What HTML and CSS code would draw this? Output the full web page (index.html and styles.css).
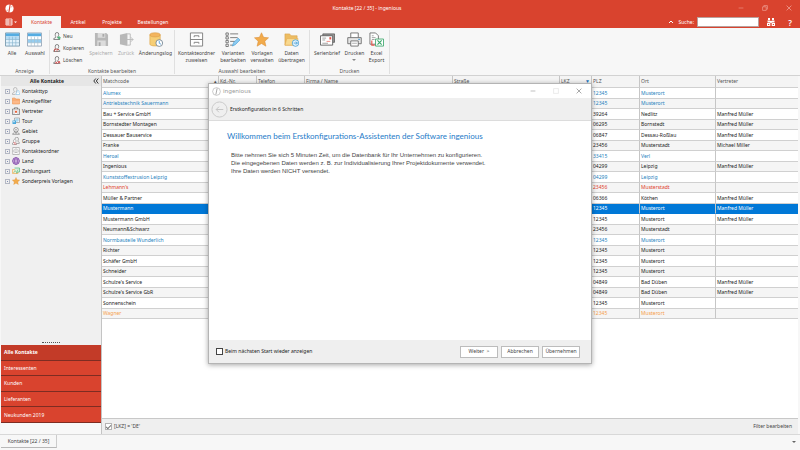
FILE: index.html
```html
<!DOCTYPE html>
<html lang="de">
<head>
<meta charset="utf-8">
<title>Kontakte - ingenious</title>
<link rel="stylesheet" href="styles.css">
</head>
<body>
<svg class="defs" aria-hidden="true">
  <symbol id="person" viewBox="0 0 16 16"><path d="M4.500 4.500a3.500 3.500 0 0 1 7 0c0 2-1 4-2 5v1.500l4 2v2h-12v-2l4-2V9.500c-1-1-1-3-1-5z" fill="none" stroke="#666" stroke-width="1.500"/></symbol>
  <symbol id="folder" viewBox="0 0 16 16"><path d="M1 2h5l1.500 2H15v10H1z" fill="#fbb98a" stroke="#ef8a3c"/><path d="M1 6h14" stroke="#ef8a3c"/></symbol>
  <symbol id="star" viewBox="0 0 16 16"><path d="M8 .8l2.200 4.900 5.300.5-4 3.600 1.200 5.300L8 12.300l-4.700 2.800 1.200-5.300-4-3.600 5.300-.5z" fill="#f2ab4b" stroke="#dc913b" stroke-width=".6"/></symbol>
  <symbol id="cabinet" viewBox="0 0 16 16"><path d="M1.500 1h13v14h-13zM1.500 8h13M5.500 5.500V4h5v1.500M5.500 12.500V11h5v1.500" fill="#fff" stroke="#808080" stroke-width="1"/></symbol>
  <symbol id="min" viewBox="0 0 10 10"><path d="M1 5h8" stroke="currentColor"/></symbol>
  <symbol id="close" viewBox="0 0 10 10"><path d="M1 1l8 8M9 1L1 9" stroke="currentColor" stroke-width="1.400"/></symbol>
</svg>

<header class="top">
  <div class="titlebar">
    <svg class="logo" viewBox="0 0 10 10"><circle cx="5" cy="5" r="4.500" fill="#fff"/><path d="M5.800 0L4.200 10" stroke="#d9432e" stroke-width="1.200"/><path d="M1.500 7.500l2-1M6.500 3.500l2-1" stroke="#d9432e" stroke-width=".5"/></svg>
    <h1>Kontakte [22 / 35] - ingenious</h1>
    <div class="winbtns">
      <button aria-label="Minimieren"><svg><use href="#min"/></svg></button>
      <button aria-label="Wiederherstellen"><svg viewBox="0 0 10 10"><path d="M1 3h6v6H1zM3 3V1h6v6H7" fill="none" stroke="currentColor" stroke-width="1.200"/></svg></button>
      <button aria-label="Schließen"><svg><use href="#close"/></svg></button>
    </div>
  </div>
  <nav class="tabs">
    <button class="file" aria-label="Datei"><svg viewBox="0 0 12 8"><path d="M1 1h6v6H1zM1 3h6M1 5h6M3 1v6" fill="none" stroke="#fff" stroke-width=".8"/><path d="M9 3.500h3L10.500 5z" fill="#fff"/></svg></button>
    <a class="tab on" href="#">Kontakte</a><a class="tab" href="#">Artikel</a><a class="tab" href="#">Projekte</a><a class="tab wide" href="#">Bestellungen</a>
    <div class="search">
      <svg class="caret" viewBox="0 0 6 6"><path d="M1 4l2-2 2 2" fill="none" stroke="#fff" stroke-width="1"/></svg>
      <label for="q">Suche:</label><input id="q" type="text">
      <button aria-label="Suchen"><svg class="bino" viewBox="0 0 10 10"><path d="M2 1h2v2H2zM6 1h2v2H6zM1.500 3.500h2.800v2H1.500zM5.700 3.500h2.800v2H5.700zM4.300 4h1.400v2H4.300zM1 6h3.300v3H1zM5.700 6H9v3H5.700z" fill="#fff"/><path d="M2 7.500h1.200M6.800 7.500H8" stroke="#d9432e"/></svg></button>
      <button class="help" aria-label="Hilfe">?</button>
    </div>
  </nav>
</header>

<section class="ribbon">
  <div class="group g1">
    <div class="tools">
      <button><svg viewBox="0 0 16 16"><path d="M.5 1h15v14H.5z" fill="#e3f2fb" stroke="#7d9db0"/><path d="M1 1.500h14v3H1z" fill="#55ade2"/><path d="M1 4.500h14v3.500H1z" fill="#b5dcf4"/><path d="M1 8h14M1 11.500h14M4.500 5v10M8 5v10M11.500 5v10" stroke="#8ab6d0" stroke-width=".7"/></svg><span>Alle</span></button>
      <button><svg viewBox="0 0 16 16"><path d="M.5 1h15v14H.5z" fill="#fff" stroke="#9ab"/><path d="M1 1.500h14v3H1z" fill="#55ade2"/><path d="M1 8h14v3.500H1z" fill="#94cdf0"/><path d="M1 8h14M1 11.500h14M4.500 5v10M8 5v10M11.500 5v10" stroke="#a5bfcd" stroke-width=".7"/></svg><span>Auswahl</span></button>
    </div>
    <h2>Anzeige</h2>
  </div>
  <div class="group g2">
    <div class="tools">
      <div class="stack">
        <button><svg viewBox="0 0 16 16"><use href="#person"/><path d="M12 8v7M8.500 11.500h7" stroke="#39b36b" stroke-width="1.800"/></svg><span>Neu</span></button>
        <button><svg viewBox="0 0 16 16"><use href="#person"/><path d="M3 15v-5h5M8 15v-4h4" fill="none" stroke="#cf3b35" stroke-width="1.300"/></svg><span>Kopieren</span></button>
        <button><svg viewBox="0 0 16 16"><use href="#person"/><path d="M9 10l5 5M14 10l-5 5M5 12l3 3M8 12l-3 3" stroke="#e33" stroke-width="1.400"/></svg><span>Löschen</span></button>
      </div>
      <button disabled><svg viewBox="0 0 16 16"><path d="M1 1h12l2 2v12H1z" fill="#b8b8b8"/><path d="M4 1h8v5H4zM3.500 9h9v6h-9z" fill="#dcdcdc"/><path d="M9 2h2v3H9zM5 11h2v4H5z" fill="#aaa"/></svg><span>Speichern</span></button>
      <button disabled><svg viewBox="0 0 16 16"><path d="M1 3l8-2v14l-8-2z" fill="#b8b8b8"/><path d="M9 2h3v12H9M8 8h7M12.500 5.500L15 8l-2.500 2.500" fill="none" stroke="#bbb"/></svg><span>Zurück</span></button>
      <button><svg viewBox="0 0 16 16"><path d="M2 3v10c0 2.500 11 2.500 11 0V3z" fill="#f6ce75" stroke="#dfa64a" stroke-width=".7"/><ellipse cx="7.500" cy="3" rx="5.500" ry="2.200" fill="#f3b55e" stroke="#d99b45" stroke-width=".6"/><circle cx="12" cy="11.800" r="3.600" fill="#fff" stroke="#6f8190" stroke-width=".9"/><path d="M12 9.500V12l1.800 1" fill="none" stroke="#2d8ccf" stroke-width=".8"/></svg><span>Änderungslog</span></button>
    </div>
    <h2>Kontakte bearbeiten</h2>
  </div>
  <div class="group g3">
    <div class="tools">
      <button><svg><use href="#cabinet"/></svg><span>Kontakteordner<br>zuweisen</span></button>
      <button><svg viewBox="0 0 16 16"><path d="M1 1h2.500v2.500H1zM1 5h2.500v2.500H1zM1 9h2.500v2.500H1zM1 13h2.500v2.500H1z" fill="#fff" stroke="#555" stroke-width=".8"/><path d="M5.500 2H14M5.500 6h8M5.500 10h5M5.500 14h3" stroke="#777" stroke-width="1"/><path d="M8 15l1-3.500 5-5 2 2-5 5z" fill="#8dccf1" stroke="#3b98d3" stroke-width=".6"/></svg><span>Varianten<br>bearbeiten</span></button>
      <button><svg><use href="#star"/></svg><span>Vorlagen<br>verwalten</span></button>
      <button><svg viewBox="0 0 16 16"><path d="M1 2h5l1.500 2H14v10H1z" fill="#edbd62" stroke="#d9a04a" stroke-width=".6"/><path d="M1 14l2-7h12l-1 7z" fill="#f9d98f" stroke="#dfa64a" stroke-width=".5"/><circle cx="12.300" cy="11.800" r="3.500" fill="#e8f5fd" stroke="#3b98d3" stroke-width=".8"/><path d="M10.300 11.800h4M12.700 10.200l1.600 1.600-1.600 1.600" fill="none" stroke="#3b98d3" stroke-width=".9"/></svg><span>Daten<br>übertragen</span></button>
    </div>
    <h2>Auswahl bearbeiten</h2>
  </div>
  <div class="group g4">
    <div class="tools">
      <button><svg viewBox="0 0 16 16"><path d="M3 2h12.500v9H3z" fill="#999" stroke="#444" stroke-width=".7"/><path d="M.5 4h13v10H.5z" fill="#fff" stroke="#555" stroke-width=".9"/><path d="M2.500 6.500h4M2.500 8.500h3M2.500 12h6" stroke="#777" stroke-width=".7"/><path d="M10 5.500h2v2.500h-2z" fill="#e6554a"/><path d="M7 10h4" stroke="#e6554a" stroke-width=".7"/></svg><span>Serienbrief</span></button>
      <button class="drop"><svg viewBox="0 0 16 16"><path d="M4 6V1h8v5" fill="#fff" stroke="#666" stroke-width=".9"/><path d="M.8 6h14.400v6.500H.8z" fill="#e6e6e6" stroke="#666" stroke-width=".9"/><path d="M4 9.500h8V15H4z" fill="#fff" stroke="#666" stroke-width=".9"/><path d="M5.500 12h5" stroke="#888" stroke-width=".7"/><path d="M12 7.800h1.800" stroke="#2d8ccf"/></svg><span>Drucken</span></button>
      <button><svg viewBox="0 0 16 16"><path d="M1 1h6l3 3v9H1z" fill="#fff" stroke="#666" stroke-width=".9"/><path d="M3 4h2M3 6h4M3 8h3" stroke="#777" stroke-width=".7"/><path d="M3 9v5h3" fill="none" stroke="#e6554a" stroke-width="1.200"/><path d="M7 7.500h8.500V15H7z" fill="#fff" stroke="#37a567" stroke-width=".9"/><path d="M9 9l4.500 4.500M13.500 9L9 13.500" stroke="#37a567" stroke-width="1.200"/></svg><span>Excel<br>Export</span></button>
    </div>
    <h2>Drucken</h2>
  </div>
</section>

<main class="body">
  <aside class="side">
    <div class="sidehead"><h2>Alle Kontakte</h2><button aria-label="Einklappen"><svg viewBox="0 0 6 6"><path d="M2.800.5L.8 3l2 2.500M5.300.5l-2 2.500 2 2.500" fill="none" stroke="#222" stroke-width=".9"/></svg></button></div>
    <ul class="tree">
      <li><i></i><svg viewBox="0 0 16 16"><path d="M3 4.500a3 3 0 0 1 7 0c0 2-1 3-1.500 4v1.500l2 1M1 15v-2.500l3.500-2V8.500C3.500 7.500 3 6 3 4.500M1 15h6" fill="none" stroke="#999" stroke-width="1.100"/><path d="M10 9a2 2 0 0 1 4 0v2l1 1v3H8v-3l2-1z" fill="#fff" stroke="#6db4e2"/></svg>Kontakttyp</li>
      <li><i></i><svg><use href="#folder"/></svg>Anzeigefilter</li>
      <li><i></i><svg viewBox="0 0 16 16"><path d="M1 4h14v11H1zM5 4V1.500h6V4" fill="#fff" stroke="#555" stroke-width="1.200"/><path d="M4 5v9M12 5v9" stroke="#888"/><path d="M6 7.500h4v4H6z" fill="#e8633c"/></svg>Vertreter</li>
      <li><i></i><svg viewBox="0 0 16 16"><path d="M5 2h10v9H5z" fill="#e8f5fc" stroke="#777"/><path d="M1 7h7v7H1z" fill="#48a8dc"/><path d="M10 3v7M6 6h8" stroke="#58b3de"/><path d="M2.500 8.500h3v2h-3z" fill="#fff"/></svg>Tour</li>
      <li><i></i><svg viewBox="0 0 16 16"><circle cx="8" cy="5.500" r="4.500" fill="#fff" stroke="#666" stroke-width="1.300"/><circle cx="8" cy="5.500" r="1.800" fill="#aaa"/><path d="M5 9l3 4 3-4M4 11l-3 3.500h14L12 11" fill="none" stroke="#666" stroke-width="1.200"/></svg>Gebiet</li>
      <li><i></i><svg viewBox="0 0 16 16"><path d="M6 4a3 3 0 0 1 7 0c0 2-1 3-1.500 4.500l3 2V13H10" fill="none" stroke="#777" stroke-width="1.100"/><path d="M3 7.500a2.300 2.300 0 0 1 5 0c0 1.500-.5 2-1 3l2 1.500v3H1v-3l3-1.500c-.5-1-1-1.500-1-3z" fill="#fff" stroke="#777"/><path d="M3 11.500h4M4 14h5" stroke="#d95050" stroke-width="1.300"/></svg>Gruppe</li>
      <li><i></i><svg><use href="#cabinet"/></svg>Kontakteordner</li>
      <li><i></i><svg viewBox="0 0 16 16"><circle cx="8" cy="8" r="6.800" fill="#e9d9f3" stroke="#7a3fa3" stroke-width="1.600"/><ellipse cx="8" cy="8" rx="3" ry="6.800" fill="none" stroke="#7a3fa3" stroke-width="1.200"/><path d="M1 8h14M2.500 4.500h11M2.500 11.500h11" stroke="#7a3fa3" stroke-width="1.200"/></svg>Land</li>
      <li><i></i><svg viewBox="0 0 16 16"><path d="M1 5h11v8H1z" fill="#fdeccd" stroke="#f0a23f" stroke-width="1.200"/><path d="M5 2h10v8h-4l-2 3" fill="#d8f2e0" stroke="#3fae71" stroke-width="1.200"/><path d="M3 12l3-5 3 4 3-6" fill="none" stroke="#3fae71"/></svg>Zahlungsart</li>
      <li><i></i><svg><use href="#star"/></svg>Sonderpreis Vorlagen</li>
    </ul>
    <div class="grip"></div>
    <nav class="filters"><a class="on" href="#">Alle Kontakte</a><a href="#">Interessenten</a><a href="#">Kunden</a><a href="#">Lieferanten</a><a href="#">Neukunden 2019</a></nav>
    <div class="sidefoot"></div>
  </aside>

  <section class="data">
    <table>
      <colgroup><col class="c1"><col class="c2"><col class="c3"><col class="c4"><col class="c5"><col class="c6"><col class="c7"><col class="c8"><col></colgroup>
      <thead><tr><th class="sort">Matchcode</th><th>Kd.-Nr.</th><th>Telefon</th><th>Firma / Name</th><th>Straße</th><th class="filtered">LKZ</th><th>PLZ</th><th>Ort</th><th>Vertreter</th></tr></thead>
      <tbody>
        <tr class="blue"><td>Alumex<td><td><td><td><td><td>12345<td>Musterort<td></tr>
        <tr class="blue"><td>Antriebstechnik Sauermann<td><td><td><td><td><td>12345<td>Musterort<td></tr>
        <tr><td>Bau + Service GmbH<td><td><td><td><td><td>39264<td>Nedlitz<td>Manfred Müller</tr>
        <tr><td>Bornstedter Montagen<td><td><td><td><td><td>06295<td>Bornstedt<td>Manfred Müller</tr>
        <tr><td>Dessauer Bauservice<td><td><td><td><td><td>06847<td>Dessau-Roßlau<td>Manfred Müller</tr>
        <tr><td>Franke<td><td><td><td><td><td>23456<td>Musterstadt<td>Michael Miller</tr>
        <tr class="blue"><td>Heroal<td><td><td><td><td><td>33415<td>Verl<td></tr>
        <tr><td>Ingenious<td><td><td><td><td><td>04299<td>Leipzig<td>Manfred Müller</tr>
        <tr class="blue"><td>Kunststoffextrusion Leipzig<td><td><td><td><td><td>04299<td>Leipzig<td></tr>
        <tr class="red"><td>Lehmann's<td><td><td><td><td><td>23456<td>Musterstadt<td></tr>
        <tr><td>Müller &amp; Partner<td><td><td><td><td><td>06366<td>Köthen<td>Manfred Müller</tr>
        <tr class="sel"><td>Mustermann<td><td><td><td><td><td>12345<td>Musterort<td>Manfred Müller</tr>
        <tr><td>Mustermann GmbH<td><td><td><td><td><td>12345<td>Musterort<td>Manfred Müller</tr>
        <tr><td>Neumann&amp;Schwarz<td><td><td><td><td><td>23456<td>Musterstadt<td></tr>
        <tr class="blue"><td>Normbauteile Wunderlich<td><td><td><td><td><td>12345<td>Musterort<td></tr>
        <tr><td>Richter<td><td><td><td><td><td>12345<td>Musterort<td></tr>
        <tr><td>Schäfer GmbH<td><td><td><td><td><td>12345<td>Musterort<td></tr>
        <tr><td>Schneider<td><td><td><td><td><td>12345<td>Musterort<td></tr>
        <tr><td>Schulze's Service<td><td><td><td><td><td>04849<td>Bad Düben<td>Manfred Müller</tr>
        <tr><td>Schulze's Service GbR<td><td><td><td><td><td>04849<td>Bad Düben<td>Manfred Müller</tr>
        <tr><td>Sonnenschein<td><td><td><td><td><td>12345<td>Musterort<td></tr>
        <tr class="orange"><td>Wagner<td><td><td><td><td><td>12345<td>Musterort<td></tr>
      </tbody>
    </table>
    <footer class="filterbar"><label><input type="checkbox" class="grey" checked> [LKZ] = 'DE'</label><a href="#">Filter bearbeiten</a></footer>
  </section>
</main>

<footer class="doctabs"><a href="#">Kontakte [22 / 35]</a><button aria-label="Registerkarten"><svg viewBox="0 0 4 4"><path d="M0 1h4L2 3z" fill="#666"/></svg></button></footer>

<dialog open class="wizard" aria-label="ingenious">
  <header class="wtitle">
    <svg class="wlogo" viewBox="0 0 10 10"><circle cx="5" cy="5" r="4.300" fill="none" stroke="#aaa" stroke-width=".7"/><path d="M5.700 1.500l-1.400 7" stroke="#aaa" stroke-width="1.100"/></svg>
    <span>ingenious</span>
    <div class="winbtns">
      <button aria-label="Minimieren"><svg><use href="#min"/></svg></button>
      <button aria-label="Maximieren" disabled><svg viewBox="0 0 10 10"><path d="M1 1h8v8H1z" fill="none" stroke="currentColor"/></svg></button>
      <button aria-label="Schließen"><svg><use href="#close"/></svg></button>
    </div>
  </header>
  <div class="step"><button aria-label="Zurück" disabled><svg viewBox="0 0 18 18"><circle cx="9" cy="9" r="8" fill="none" stroke="#c9c9c9"/><path d="M13 9H5.500M8.500 6l-3 3 3 3" fill="none" stroke="#c4c4c4"/></svg></button><span>Erstkonfiguration in 6 Schritten</span></div>
  <div class="wbody">
    <h2>Willkommen beim Erstkonfigurations-Assistenten der Software ingenious</h2>
    <p>Bitte nehmen Sie sich 5 Minuten Zeit, um die Datenbank für Ihr Unternehmen zu konfigurieren.<br>Die eingegebenen Daten werden z. B. zur Individualisierung Ihrer Projektdokumente verwendet.<br>Ihre Daten werden NICHT versendet.</p>
  </div>
  <footer class="wfoot"><label><input type="checkbox"> Beim nächsten Start wieder anzeigen</label><div><button>Weiter &nbsp;&gt;</button><button>Abbrechen</button><button>Übernehmen</button></div></footer>
</dialog>
</body>
</html>
```
FILE: styles.css
```css
* { box-sizing: border-box; }
body {
  margin: 0;
  min-height: 100vh;
  display: flex;
  flex-direction: column;
  position: relative;
  background: #f7f7f7;
  color: #222;
  font: 5px/7px "Noto Sans", "Open Sans", sans-serif;
}
h1, h2, p, ul { margin: 0; padding: 0; font: inherit; list-style: none; }
a { color: inherit; text-decoration: none; }
button { border: 0; padding: 0; background: none; color: inherit; font: inherit; }
input { margin: 0; }
svg { display: block; flex: none; }
.defs { position: absolute; width: 0; height: 0; }

/* title bar and tabs */
.top { background: #d9432e; color: #fff; }
.titlebar { display: grid; grid-template-columns: 5fr auto 6fr; align-items: center; height: 16px; padding: 0 8px 0 5px; }
.logo { width: 9px; height: 9px; }
.titlebar h1 { padding-left: 2px; }
.winbtns { display: flex; justify-content: flex-end; gap: 18px; }
.winbtns svg { width: 6px; height: 6px; }
.titlebar .winbtns { color: #ee9c90; }
.tabs { display: flex; height: 12px; }
.file { width: 22px; display: grid; place-items: center; }
.file svg { width: 12px; height: 8px; }
.tab { width: 34px; line-height: 13px; text-align: center; }
.tab.on { width: 39px; background: #f7f7f7; color: #d9432e; }
.tab.wide { width: 48px; }
.search { margin-left: auto; display: flex; align-items: center; padding-right: 7px; }
.caret { width: 6px; height: 6px; margin-right: 5px; }
.search input { width: 62px; height: 10px; margin: 0 7px 0 3px; padding: 0 2px; border: 1px solid #b9a09c; background: #fff; font: inherit; }
.bino { width: 10px; height: 10px; }
.help { width: 6px; margin-left: 11px; font-size: 8px; font-weight: 600; }

/* ribbon */
.ribbon { display: flex; height: 48px; padding-top: 2px; border-bottom: 1px solid #d2d2d2; }
.group { display: flex; flex-direction: column; justify-content: space-between; margin-bottom: 1px; border-right: 1px solid #e0e0e0; }
.group h2 { text-align: center; color: #555; line-height: 5px; }
.tools { display: grid; padding-top: 2px; }
.tools button { display: flex; flex-direction: column; align-items: center; justify-self: center; white-space: nowrap; color: #444; }
.tools button > svg { width: 15px; height: 15px; margin-bottom: 3px; }
.tools button:disabled { color: #aaa; }
.g1 { width: 50px; }
.g1 .tools { grid-template-columns: 24px 22px; }
.g2 { width: 125px; }
.g2 .tools { grid-template-columns: 38px 26px 24px 35px; }
.g3 { width: 135px; }
.g3 .tools { grid-template-columns: 43px 30px 28px 31px; }
.g4 { width: 80px; }
.g4 .tools { grid-template-columns: 34px 21px 23px; }
.stack { display: flex; flex-direction: column; gap: 4px; padding-left: 3px; }
.stack button { flex-direction: row; justify-self: start; gap: 2px; }
.tools .stack svg { width: 8px; height: 8px; margin: 0; }
.drop::after { content: ""; margin-top: 2px; border: 2px solid transparent; border-top-color: #888; }

/* sidebar */
.body { flex: 1; display: flex; }
.side { width: 101px; margin-left: 1px; display: flex; flex-direction: column; background: #f0f0f0; border-right: 1px solid #c4c4c4; }
.sidehead { display: flex; align-items: center; height: 10px; padding-right: 2px; background: #e6e6e6; }
.sidehead h2 { flex: 1; text-align: center; font-weight: 700; }
.sidehead svg { width: 6px; height: 6px; }
.tree li { display: flex; align-items: center; height: 10px; padding-left: 4px; }
.tree i { width: 5px; height: 5px; margin-right: 2px; border: 1px solid #b4b8c4; background: #8390b4; background-clip: content-box; padding: 1px; }
.tree svg { width: 8px; height: 8px; margin-right: 2px; }
.grip { margin-top: auto; height: 3px; width: 18px; align-self: center; border-top: 1px dotted #555; }
.filters { display: flex; flex-direction: column; height: 78px; color: #fff; background: #d9432e; }
.filters a { flex: 1; display: flex; align-items: center; padding: 1px 0 0 3px; border-bottom: 1px solid #7e2c22; }
.filters .on { background: #c33b28; font-weight: 700; }
.sidefoot { height: 11px; background: #f8f8f8; }

/* contact table */
.data { flex: 1; display: flex; flex-direction: column; min-width: 0; margin-right: 2px; background: #fff; }
table { width: 100%; table-layout: fixed; border-collapse: separate; border-spacing: 0; margin-bottom: auto; }
.c1 { width: 117px; } .c2 { width: 38px; } .c3 { width: 48px; } .c4 { width: 148px; } .c5 { width: 107px; }
.c6 { width: 32px; } .c7 { width: 48px; } .c8 { width: 76px; }
th, td { padding: 0 1px; height: 11px; line-height: 9px; text-align: left; font-weight: 400; white-space: nowrap; border-right: 1px solid #c6c6c6; border-bottom: 1px solid #d0d0d0; }
tr:nth-child(even) td { height: 10px; background: #f5f5f5; }
th { height: 12px; background: #f4f4f4; color: #555; }
th:last-child, td:last-child { border-right: 0; }
.sort::after, .filtered::after { float: right; content: "▴"; }
.filtered::after { content: "▼"; color: #1b75bb; }
.blue { color: #2581bd; }
.red { color: #e0402c; }
.orange { color: #f5a04a; }
tr.sel:nth-child(n) td { background: #0078d7; color: #fff; border-bottom-color: #0078d7; }
.filterbar { display: flex; align-items: center; justify-content: space-between; height: 16px; padding: 0 6px 0 3px; background: #efefef; border-top: 1px solid #c8c8c8; color: #444; }
label { display: flex; align-items: center; gap: 2px; }
input[type=checkbox] { appearance: none; width: 7px; height: 7px; border: 1px solid #444; background: #fff; display: grid; place-items: center; }
input.grey[type=checkbox] { border-color: #b4b4b4; }
input[type=checkbox]:checked::after { content: ""; width: 4px; height: 2px; border: solid #777; border-width: 0 0 1px 1px; transform: rotate(-45deg); }

/* document tabs */
.doctabs { display: flex; justify-content: space-between; height: 16px; padding: 0 4px 2px 1px; border-top: 1px solid #d8d8d8; }
.doctabs a { width: 56px; line-height: 13px; text-align: center; color: #444; border-right: 1px solid #ccc; border-bottom: 1px solid #b8b8b8; }
.doctabs svg { width: 4px; height: 4px; }

/* wizard window */
.wizard { position: absolute; top: 83px; left: calc(50% - 192px); width: 384px; height: 281px; margin: 0; padding: 0; border: 1px solid #b4b4b4; background: #fff; color: #222; display: flex; flex-direction: column; box-shadow: 0 1px 5px rgba(0, 0, 0, .35); }
.wtitle { display: flex; align-items: center; height: 14px; padding: 0 9px 0 3px; color: #999; font-size: 6px; }
.wlogo { width: 9px; height: 9px; margin-right: 2px; }
.wtitle .winbtns { margin-left: auto; gap: 17px; }
.wtitle button:disabled { color: #ddd; }
.step { display: flex; align-items: center; gap: 2px; height: 23px; padding-left: 2px; background: #efefef; border-bottom: 1px solid #dcdcdc; }
.step svg { width: 17px; height: 17px; }
.wbody { flex: 1; padding: 9px 18px; }
.wbody h2 { font-family: Lato, sans-serif; font-size: 8px; line-height: 12px; color: #1e7bc8; }
.wbody p { margin: 9px 0 0 4px; font-family: "Liberation Sans", sans-serif; font-size: 6px; line-height: 8px; color: #444; }
.wfoot { display: flex; align-items: center; justify-content: space-between; height: 23px; padding: 0 11px 0 7px; background: #efefef; }
.wfoot div { display: flex; gap: 3px; }
.wfoot button { width: 38px; height: 12px; border: 1px solid #bcbcbc; background: #fff; color: #444; }
```
